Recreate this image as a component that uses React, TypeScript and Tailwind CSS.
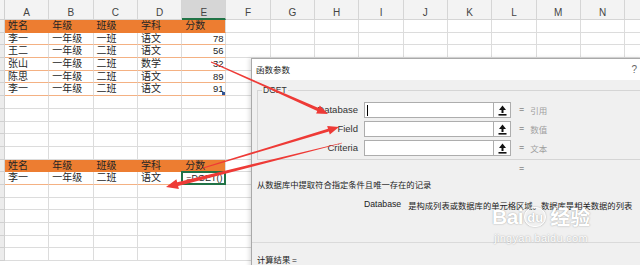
import React from 'react';

const LETTERS = ['A', 'B', 'C', 'D', 'E', 'F', 'G', 'H', 'I', 'J', 'K', 'L', 'M', 'N', ''];

type RowKind = 'head' | 'data' | 'empty';
type SheetRow = { kind: RowKind; cells?: string[] };

const HEAD = ['姓名', '年级', '班级', '学科', '分数'];

const rows: SheetRow[] = [
  { kind: 'head', cells: HEAD },
  { kind: 'data', cells: ['李一', '一年级', '一班', '语文', '78'] },
  { kind: 'data', cells: ['王二', '一年级', '二班', '语文', '56'] },
  { kind: 'data', cells: ['张山', '一年级', '二班', '数学', '32'] },
  { kind: 'data', cells: ['陈思', '一年级', '二班', '语文', '89'] },
  { kind: 'data', cells: ['李一', '一年级', '二班', '语文', '91'] },
  { kind: 'empty' },
  { kind: 'empty' },
  { kind: 'empty' },
  { kind: 'empty' },
  { kind: 'empty' },
  { kind: 'head', cells: HEAD },
  { kind: 'data', cells: ['李一', '一年级', '二班', '语文', '=DGET()'] },
  { kind: 'empty' },
  { kind: 'empty' },
  { kind: 'empty' },
  { kind: 'empty' },
  { kind: 'empty' },
  { kind: 'empty' },
];

// tapered red arrow: thin tail, thicker shaft near the head
function arrowPoints(x1: number, y1: number, x2: number, y2: number, w0: number, w1: number, L: number, W: number) {
  const dx = x2 - x1;
  const dy = y2 - y1;
  const len = Math.hypot(dx, dy);
  const ux = dx / len;
  const uy = dy / len;
  const nx = -uy;
  const ny = ux;
  const bx = x2 - ux * L;
  const by = y2 - uy * L;
  const pts = [
    [x1 + (nx * w0) / 2, y1 + (ny * w0) / 2],
    [bx + (nx * w1) / 2, by + (ny * w1) / 2],
    [bx + (nx * W) / 2, by + (ny * W) / 2],
    [x2, y2],
    [bx - (nx * W) / 2, by - (ny * W) / 2],
    [bx - (nx * w1) / 2, by - (ny * w1) / 2],
    [x1 - (nx * w0) / 2, y1 - (ny * w0) / 2],
  ];
  return pts.map((p) => p.map((v) => v.toFixed(1)).join(',')).join(' ');
}

function Row({ row, index }: { row: SheetRow; index: number }) {
  return (
    <div className="flex h-[12.7px]">
      <div className="w-[5px] shrink-0 bg-[#ececec] border-r border-b border-[#d0d0d0]" />
      {LETTERS.map((l, i) => {
        const inTable = i < 5 && row.kind !== 'empty';
        const text = row.cells && i < 5 ? row.cells[i] : '';
        const isNum = row.kind === 'data' && i === 4 && /^\d+$/.test(text);
        let cls = 'border-r border-b border-[#dcdcdc]';
        if (inTable && row.kind === 'head') {
          cls = i < 4 ? 'bg-[#ed7d31] border-r border-b border-[#ed7d31]' : 'bg-[#ed7d31] border-r border-b border-r-[#dcdcdc] border-b-[#ed7d31]';
        } else if (inTable && row.kind === 'data') {
          cls = 'border-r border-b border-r-[#dcdcdc] border-b-[#f4b183]';
        }
        const formula = text.startsWith('=');
        return (
          <div
            key={i}
            className={`relative w-[44.3px] shrink-0 overflow-visible whitespace-nowrap text-[10px] leading-[12px] text-[#262626] ${cls} ${isNum ? 'text-right pr-[2px]' : 'pl-[3px]'}`}
          >
            {formula ? (
              <>
                <span className="text-[9px] font-['Liberation_Sans',sans-serif] pl-[1px]">{text}</span>
                <span className="absolute -left-[1px] -top-[1px] -right-[1px] -bottom-[1px] border-2 border-[#217346]" />
              </>
            ) : (
              <span className={isNum ? "font-['Liberation_Sans',sans-serif] text-[9.5px]" : ''}>{text}</span>
            )}
            {index === 5 && i === 4 && <span className="absolute right-0 bottom-0 w-[3px] h-[3px] bg-[#2f5597]" />}
          </div>
        );
      })}
    </div>
  );
}

function CollapseIcon() {
  return (
    <svg width="9" height="11" viewBox="0 0 9 11">
      <path d="M4.5 0.5 L8 5 L5.5 5 L5.5 8 L3.5 8 L3.5 5 L1 5 Z" fill="#111" />
      <rect x="0.5" y="9" width="8" height="1.6" fill="#111" />
    </svg>
  );
}

function ParamRow({ label, hint, cursor }: { label: string; hint: string; cursor?: boolean }) {
  return (
    <div className="flex items-center h-[16px]">
      <div className="w-[100px] text-right text-[9.5px] text-[#333] font-['Liberation_Sans',sans-serif]">{label}</div>
      <div className="ml-[6px] w-[130px] h-[16px] bg-white border border-[#adadad] flex items-center">
        {cursor && <span className="ml-[2px] w-px h-[11px] bg-black" />}
      </div>
      <div className="w-[17px] h-[16px] bg-[#fdfdfd] border border-l-0 border-[#adadad] flex items-center justify-center">
        <CollapseIcon />
      </div>
      <span className="ml-[8px] text-[9px] text-[#555] font-['Liberation_Sans',sans-serif]">=</span>
      <span className="ml-[6px] text-[8.5px] text-[#a0a0a0]">{hint}</span>
    </div>
  );
}

export default function App() {
  return (
    <div className="relative w-[640px] h-[265px] overflow-hidden bg-white font-['Liberation_Sans','Noto_Sans_CJK_SC',sans-serif]">
      {/* Spreadsheet */}
      <div className="flex flex-col">
        <div className="flex h-[20px] bg-[#f3f3f3]">
          <div className="w-[5px] shrink-0 border-r border-b border-[#d0d0d0]" />
          {LETTERS.map((l, i) => (
            <div
              key={i}
              className={`w-[44.3px] shrink-0 flex justify-center pt-[7px] text-[10px] leading-[12px] text-[#444] border-r border-[#d5d5d5] ${
                i === 4 ? 'bg-[#d6d6d6] border-b-2 border-b-[#217346]' : 'border-b border-b-[#d5d5d5]'
              }`}
            >
              {l}
            </div>
          ))}
        </div>
        {rows.map((r, idx) => (
          <Row key={idx} row={r} index={idx} />
        ))}
      </div>

      {/* Function arguments dialog */}
      <div className="absolute left-[251px] top-[58px] w-[392px] h-[220px] border-l border-t border-[#a9a9a9] bg-[#f0f0f0] shadow-[-2px_0_4px_rgba(0,0,0,0.12)] flex flex-col">
        <div className="h-[21px] bg-white flex items-center justify-between pl-[4px] pr-[6px]">
          <span className="text-[8.5px] text-[#222] font-['Noto_Sans_CJK_SC',sans-serif]">函数参数</span>
          <span className="text-[10px] text-[#666]">?</span>
        </div>
        <div className="flex flex-col pl-[5px] font-['Noto_Sans_CJK_SC',sans-serif]">
          <div className="relative mt-[10px] h-[70px] border border-[#d5d5d5] flex flex-col gap-[3px] pt-[11px]">
            <span className="absolute left-[4px] -top-[7px] px-[1px] bg-[#f0f0f0] text-[8.5px] leading-[12px] text-[#333] font-['Liberation_Sans',sans-serif]">
              DGET
            </span>
            <ParamRow label="Database" hint="引用" cursor />
            <ParamRow label="Field" hint="数值" />
            <ParamRow label="Criteria" hint="文本" />
          </div>
          <div className="h-[18px] flex items-center pl-[262px] text-[9px] text-[#555] font-['Liberation_Sans',sans-serif]">=</div>
          <div className="h-[12px] leading-[12px] text-[8.3px] text-[#222]">从数据库中提取符合指定条件且唯一存在的记录</div>
          <div className="mt-[9px] h-[12px] flex items-center pl-[107px] text-[8.3px] text-[#222]">
            <span className="font-['Liberation_Sans',sans-serif] text-[8.7px]">Database</span>
            <span className="ml-[7px]">是构成列表或数据库的单元格区域。数据库是相关数据的列表</span>
          </div>
          <div className="mt-[31px] -ml-[5px] border-t border-[#dadada]" />
          <div className="mt-[10px] h-[12px] leading-[12px] text-[8.3px] text-[#222]">
            计算结果 <span className="font-['Liberation_Sans',sans-serif]">=</span>
          </div>
        </div>
      </div>

      {/* Baidu jingyan watermark */}
      <div className="absolute left-[492px] top-[206px] flex flex-col items-center text-white [text-shadow:0_0_1.5px_#8f8f8f]">
        <div className="flex items-end leading-none">
          <span className="text-[21px] font-bold font-['Liberation_Sans',sans-serif] tracking-[-0.5px]">Bai</span>
          <span className="ml-[1px] w-[22px] h-[20px] rounded-full border-[1.5px] border-white flex items-center justify-center text-[13px] font-bold font-['Liberation_Sans',sans-serif] shadow-[0_0_1.5px_#8f8f8f]">
            du
          </span>
          <span className="ml-[4px] text-[20px] font-bold font-['Noto_Sans_CJK_SC',sans-serif]">经验</span>
        </div>
        <div className="mt-[6px] text-[11px] leading-none font-['Liberation_Sans',sans-serif] tracking-[0.3px]">jingyan.baidu.com</div>
      </div>

      {/* Red annotation arrows */}
      <svg className="absolute inset-0 pointer-events-none" width="640" height="265" viewBox="0 0 640 265">
        <polygon points={arrowPoints(211, 62, 328, 114, 0.8, 3.2, 11, 9)} fill="#ee3a36" />
        <polygon points={arrowPoints(203, 168, 339, 127, 0.8, 3, 11, 9)} fill="#ee3a36" />
        <polygon points={arrowPoints(342, 143, 166, 187, 0.6, 3.8, 12, 10)} fill="#ee3a36" />
      </svg>
    </div>
  );
}
